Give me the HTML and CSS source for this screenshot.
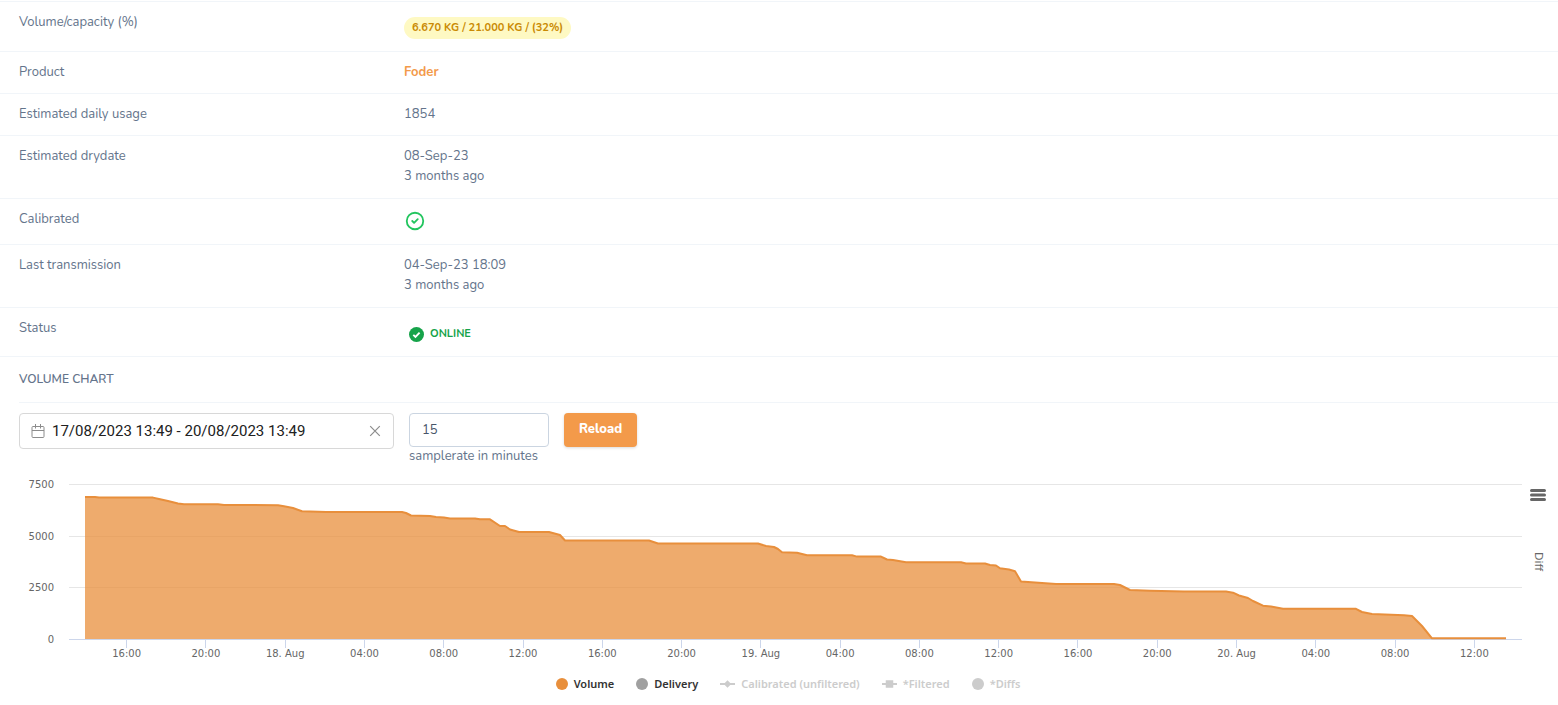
FILE: index.html
```
<!DOCTYPE html>
<html lang="en">
<head>
    <meta charset="UTF-8">
    <meta name="viewport" content="width=device-width, initial-scale=1.0">
    <title>Volume chart</title>
    <link rel="stylesheet" href="styles.css">
</head>
<body>
    <main>
        <dl class="details">
            <div class="row">
                <dt>Volume/capacity (%)</dt>
                <dd><span class="badge">6.670 KG / 21.000 KG / (32%)</span></dd>
            </div>
            <div class="row">
                <dt>Product</dt>
                <dd><a class="product-link" href="#">Foder</a></dd>
            </div>
            <div class="row">
                <dt>Estimated daily usage</dt>
                <dd>1854</dd>
            </div>
            <div class="row two-lines">
                <dt>Estimated drydate</dt>
                <dd>08-Sep-23<br>3 months ago</dd>
            </div>
            <div class="row">
                <dt>Calibrated</dt>
                <dd>
                    <svg class="calibrated-icon" viewBox="0 0 24 24" role="img" aria-label="Yes">
                        <path d="M9 12l2 2 4-4m6 2a9 9 0 11-18 0 9 9 0 0118 0z"/>
                    </svg>
                </dd>
            </div>
            <div class="row two-lines">
                <dt>Last transmission</dt>
                <dd>04-Sep-23 18:09<br>3 months ago</dd>
            </div>
            <div class="row">
                <dt>Status</dt>
                <dd>
                    <span class="status">
                        <svg class="status-icon" viewBox="0 0 16 16" aria-hidden="true">
                            <circle cx="8" cy="8" r="8"/>
                            <path d="M4.6 8.4l2.3 2.2 4.4-4.6"/>
                        </svg>
                        ONLINE
                    </span>
                </dd>
            </div>
        </dl>

        <section class="volume">
            <h2>Volume chart</h2>

            <form class="filters">
                <div class="date-field">
                    <svg class="calendar-icon" viewBox="0 0 14 14" aria-hidden="true">
                        <path d="M2 2.5h10q1 0 1 1v9q0 1-1 1H2q-1 0-1-1v-9q0-1 1-1zM1 6.5h12M4.5 0v4.5M9.5 0v4.5"/>
                    </svg>
                    <input type="text" aria-label="Date range" value="17/08/2023 13:49 - 20/08/2023 13:49">
                    <button type="button" class="clear" aria-label="Clear">
                        <svg viewBox="0 0 10 10"><path d="M1 1l8 8M9 1l-8 8"/></svg>
                    </button>
                </div>
                <div class="samplerate">
                    <input type="text" id="samplerate" value="15">
                    <label for="samplerate">samplerate in minutes</label>
                </div>
                <button type="button" class="reload">Reload</button>
            </form>

            <div class="chart">
                <div class="y-axis">
                    <span>7500</span>
                    <span>5000</span>
                    <span>2500</span>
                    <span>0</span>
                </div>
                <svg class="plot" viewBox="0 0 1453 156" preserveAspectRatio="none" role="img" aria-label="Volume">
                    <path class="grid-line" d="M0 .5H1453M0 52.5H1453M0 103.5H1453"/>
                    <path class="area" id="area"/>
                    <path class="axis-line" d="M0 155.5H1453"/>
                    <path class="line" id="line"/>
                </svg>
                <div class="chart-side">
                    <button type="button" class="chart-menu" aria-label="Chart menu">
                        <svg viewBox="0 0 16 14"><path d="M1.5 2.5h13M1.5 7h13M1.5 11.5h13"/></svg>
                    </button>
                    <span class="side-title">Diff</span>
                </div>
                <div class="x-axis">
                    <span>16:00</span>
                    <span>20:00</span>
                    <span>18. Aug</span>
                    <span>04:00</span>
                    <span>08:00</span>
                    <span>12:00</span>
                    <span>16:00</span>
                    <span>20:00</span>
                    <span>19. Aug</span>
                    <span>04:00</span>
                    <span>08:00</span>
                    <span>12:00</span>
                    <span>16:00</span>
                    <span>20:00</span>
                    <span>20. Aug</span>
                    <span>04:00</span>
                    <span>08:00</span>
                    <span>12:00</span>
                </div>
            </div>

            <div class="legend">
                <button type="button">
                    <svg class="dot" viewBox="0 0 12 12"><circle cx="6" cy="6" r="6" fill="#e88f3c"/></svg>
                    Volume
                </button>
                <button type="button">
                    <svg class="dot" viewBox="0 0 12 12"><circle cx="6" cy="6" r="6" fill="#a0a0a0"/></svg>
                    Delivery
                </button>
                <button type="button" class="off">
                    <svg class="mark" viewBox="0 0 16 12"><path d="M0 5h16v2H0zM8 2l4 4-4 4-4-4z"/></svg>
                    Calibrated (unfiltered)
                </button>
                <button type="button" class="off">
                    <svg class="mark" viewBox="0 0 16 12"><path d="M0 5h16v2H0zM4 2h8v8H4z"/></svg>
                    *Filtered
                </button>
                <button type="button" class="off">
                    <svg class="dot" viewBox="0 0 12 12"><circle cx="6" cy="6" r="6"/></svg>
                    *Diffs
                </button>
            </div>
        </section>
    </main>

    <script src="chart.js"></script>
</body>
</html>
```
FILE: styles.css
```
* {
    box-sizing: border-box;
}
body {
    margin: 0;
    background-color: #fff;
    color: #64748b;
    font-family: "Nunito", "Open Sans", sans-serif;
    font-size: 13px;
    line-height: 20px;
}
button, input {
    font-family: inherit;
}
.details {
    margin: 0;
    padding-top: 1px;
}
.row {
    display: grid;
    grid-template-columns: 385px 1fr;
    padding: 10px 19px 11px;
    border-top: 1px solid #f1f5f9;
}
.row.two-lines {
    padding-bottom: 12px;
}
.row:last-child {
    border-bottom: 1px solid #f1f5f9;
}
.row dd {
    margin: 0;
}
.badge {
    display: inline-block;
    margin: 5px 0 1px;
    padding: 0 8px;
    border-radius: 11px;
    background-color: #fef9c3;
    color: #ca8a04;
    font-size: 11px;
    font-weight: 700;
    line-height: 22px;
}
.product-link {
    color: #f39a4a;
    font-weight: 700;
    text-decoration: none;
}
.calibrated-icon {
    display: block;
    width: 22px;
    height: 22px;
    margin: 1px 0;
    fill: none;
    stroke: #22c55e;
    stroke-width: 2;
    stroke-linecap: round;
    stroke-linejoin: round;
}
.status {
    display: flex;
    align-items: center;
    gap: 6px;
    padding: 6px 5px 1px;
    color: #16a34a;
    font-size: 11px;
    font-weight: 700;
}
.status-icon {
    width: 15px;
    height: 15px;
    fill: #16a34a;
}
.status-icon path {
    fill: none;
    stroke: #fff;
    stroke-width: 2;
}
.volume h2 {
    margin: 0 0 0 19px;
    padding: 12px 0 13px;
    border-bottom: 1px solid #f1f5f9;
    font-size: 12px;
    font-weight: 600;
    text-transform: uppercase;
}
.filters {
    display: flex;
    align-items: flex-start;
    gap: 15px;
    padding: 10px 19px 0;
}
.date-field {
    display: flex;
    align-items: center;
    width: 375px;
    height: 36px;
    padding: 0 12px 0 11px;
    border: 1px solid #d8d8d8;
    border-radius: 4px;
}
.date-field input {
    flex: 1;
    min-width: 0;
    padding: 0 7px;
    border: 0;
    color: #212121;
    font-family: "Roboto", sans-serif;
    font-size: 15px;
}
.calendar-icon {
    width: 14px;
    height: 14px;
    fill: none;
    stroke: #8c8c8c;
}
.clear, .chart-menu {
    padding: 0;
    border: 0;
    background: none;
    cursor: pointer;
}
.clear svg {
    display: block;
    width: 12px;
    height: 12px;
    stroke: #8c8c8c;
}
.samplerate {
    width: 140px;
}
.samplerate input {
    display: block;
    width: 100%;
    height: 34px;
    padding: 0 12px;
    border: 1px solid #cbd5e1;
    border-radius: 4px;
    color: #475569;
    font-size: 13px;
}
.samplerate label {
    display: block;
    line-height: 18px;
    white-space: nowrap;
}
.reload {
    height: 34px;
    padding: 0 15px 2px;
    border: 0;
    border-radius: 4px;
    background-color: #f39a4a;
    box-shadow: 0 1px 3px rgba(0, 0, 0, 0.15);
    color: #fff;
    font-size: 13px;
    font-weight: 800;
    cursor: pointer;
}
.chart {
    display: grid;
    grid-template-columns: 54px 1fr 36px;
    padding-top: 19px;
    color: #666;
    font-family: "DejaVu Sans", sans-serif;
    font-size: 10px;
}
.y-axis {
    display: flex;
    flex-direction: column;
    justify-content: space-between;
    margin: -7px 0 -8px;
    line-height: 16px;
    text-align: right;
}
.plot {
    display: block;
    width: calc(100% - 15px);
    height: 156px;
    margin-left: 15px;
}
.plot path {
    fill: none;
    vector-effect: non-scaling-stroke;
}
.plot .grid-line {
    stroke: #e6e6e6;
}
.plot .axis-line {
    stroke: #ccd6eb;
}
.plot .line {
    stroke: #e88f3c;
    stroke-width: 2;
    stroke-linejoin: round;
}
.plot .area {
    fill: #e88f3c;
    fill-opacity: 0.75;
}
.chart-side {
    display: flex;
    flex-direction: column;
    align-items: center;
    gap: 50px;
    padding: 4px 4px 0 0;
}
.chart-menu svg {
    display: block;
    width: 18px;
    height: 14px;
    stroke: #666;
    stroke-width: 3;
    stroke-linecap: round;
}
.side-title {
    font-size: 11px;
    line-height: 16px;
    writing-mode: vertical-rl;
}
.x-axis {
    display: grid;
    grid-column: 2;
    grid-template-columns: repeat(18, 1fr);
    padding: 0 8px 0 33px;
    text-align: center;
    white-space: nowrap;
    line-height: 12px;
}
.x-axis span::before {
    content: "";
    display: block;
    width: 1px;
    height: 8px;
    margin: 0 auto;
    background-color: #ccd6eb;
}
.legend {
    display: flex;
    justify-content: center;
    gap: 22px;
    padding: 14px 0 12px 18px;
}
.legend button {
    display: flex;
    align-items: center;
    gap: 6px;
    padding: 0;
    border: 0;
    background: none;
    color: #333;
    font-family: "Noto Sans", sans-serif;
    font-size: 11px;
    font-weight: 600;
    line-height: 20px;
    cursor: pointer;
}
.legend .off {
    color: #ccc;
    fill: #ccc;
}
.dot {
    width: 12px;
    height: 12px;
}
.mark {
    width: 15px;
    height: 12px;
}
```
FILE: chart.js
```
// Points of the volume series, in plot units
const points = [
    [16, 13], [26, 13], [30, 13.6], [84, 13.6], [90, 15], [99, 17], [109, 19.5], [115, 20.3],
    [149, 20.3], [155, 21], [209, 21.2], [215, 22.3], [224, 24], [233, 27.3], [257, 28],
    [333, 28], [337, 29], [342, 31.5], [361, 32], [367, 33], [375, 33.6], [381, 34.5],
    [406, 34.5], [411, 35.3], [421, 35.3], [431, 42], [436, 42], [441, 45.5], [450, 48],
    [480, 48], [491, 51], [496, 56.5], [580, 56.5], [589, 59.5], [689, 59.5], [697, 62],
    [705, 63], [709, 65], [713, 68.3], [728, 68.8], [738, 71.3], [783, 71.3], [788, 72.6],
    [812, 72.6], [818, 75.5], [824, 76], [837, 78.3], [892, 78.3], [897, 79.5], [916, 79.5],
    [921, 81], [927, 81.5], [931, 84.3], [940, 85.5], [946, 87.3], [952, 97.5], [973, 99],
    [987, 100], [1045, 100], [1051, 101], [1061, 106], [1081, 106.7], [1115, 107.6],
    [1157, 107.6], [1164, 108.7], [1170, 111.5], [1179, 114], [1184, 117], [1194, 121.7],
    [1202, 122.5], [1214, 124.8], [1287, 124.8], [1293, 128], [1303, 130], [1335, 131.2],
    [1343, 132], [1353, 142], [1363, 154.3], [1437, 154.3]
];

const line = 'M' + points.map(point => point.join(' ')).join('L');
document.getElementById('line').setAttribute('d', line);
document.getElementById('area').setAttribute('d', line + 'V155H16Z');
```
